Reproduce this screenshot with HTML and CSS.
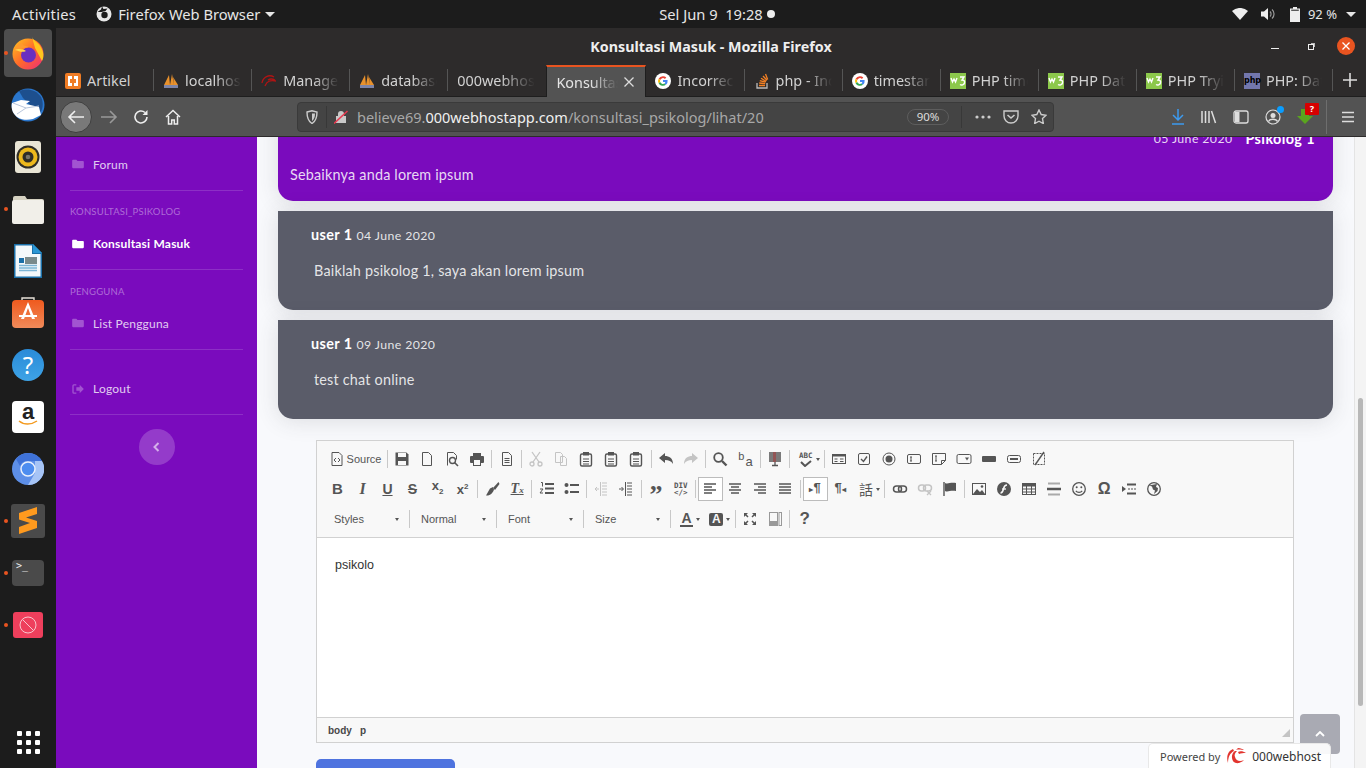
FILE: index.html
```html
<!DOCTYPE html>
<html lang="id">
<head>
    <meta charset="UTF-8">
    <meta name="viewport" content="width=device-width, initial-scale=1.0">
    <title>Konsultasi Masuk - Mozilla Firefox</title>
    <link rel="stylesheet" href="styles.css">
</head>
<body>
    <svg class="sprite" width="0" height="0">
        <defs>
            <linearGradient id="ffOuter" x1="0" y1="0" x2="1" y2="1"><stop offset="0" stop-color="#ffc61e"/><stop offset=".5" stop-color="#ff6a2a"/><stop offset="1" stop-color="#ec2a7c"/></linearGradient>
            <linearGradient id="blueGrad" x1="0" y1="0" x2="0" y2="1"><stop offset="0" stop-color="#2a8bd8"/><stop offset="1" stop-color="#3ea3e6"/></linearGradient>
            <linearGradient id="orangeGrad" x1="0" y1="0" x2="0" y2="1"><stop offset="0" stop-color="#ef5a1e"/><stop offset="1" stop-color="#f08a5a"/></linearGradient>
            <symbol id="i-folder" viewBox="0 0 14 12"><path d="M0 2a1 1 0 0 1 1-1h4l1.400 1.500H13a1 1 0 0 1 1 1V10a1 1 0 0 1-1 1H1a1 1 0 0 1-1-1z" fill="currentColor"/></symbol>
            <symbol id="f-sail" viewBox="0 0 16 16"><path d="M1 12 6 2l1 10zM7 12l2-11 2 11zM11 12 10 4l5 8z" fill="#e8912c"/><rect x="1" y="12" width="14" height="3" fill="#7c84a8"/></symbol>
            <symbol id="f-g" viewBox="0 0 16 16"><circle cx="8" cy="8" r="8" fill="#fff"/><path d="M8 3.200a4.800 4.800 0 0 1 3.300 1.300L9.900 5.900A2.900 2.900 0 0 0 5.200 7L3.600 5.800A4.800 4.800 0 0 1 8 3.200z" fill="#ea4335"/><path d="M3.600 5.800 5.200 7a3 3 0 0 0 0 2L3.600 10.200a4.800 4.800 0 0 1 0-4.400z" fill="#fbbc05"/><path d="M3.600 10.200 5.200 9a2.900 2.900 0 0 0 4.300 1.500l1.500 1.200A4.800 4.800 0 0 1 3.600 10.200z" fill="#34a853"/><path d="M8 7.100h4.600a5 5 0 0 1-1.600 4.600L9.500 10.500A2 2 0 0 0 10.300 9H8z" fill="#4285f4"/></symbol>
            <symbol id="f-w3" viewBox="0 0 16 16"><rect width="16" height="16" fill="#8cc84b"/><path d="M1 5l1.500 4L4 6l1.500 3L7 5M10 4h4l-2 3c2 0 3 1 2.500 3-.5 2-3 2.500-4.500 1.500" fill="none" stroke="#fff" stroke-width="1.400"/></symbol>
            <symbol id="s-doc" viewBox="0 0 16 16"><path d="M3.500 1.500h6l3 3v10h-9z" fill="none" stroke="currentColor"/></symbol>
            <symbol id="s-paste" viewBox="0 0 16 16"><rect x="2.500" y="3" width="11" height="12" rx="1.500" fill="none" stroke="currentColor" stroke-width="1.400"/><rect x="5" y="1" width="6" height="3.500" fill="currentColor"/><path d="M5 8h6M5 10.500h6M5 13h6" stroke="currentColor"/></symbol>
            <symbol id="s-box" viewBox="0 0 16 16"><rect x="1.500" y="3.500" width="13" height="9" rx="1.500" fill="none" stroke="currentColor"/><path d="M5 6v4M4 6h2M4 10h2" stroke="currentColor"/></symbol>
            <symbol id="s-lines-l" viewBox="0 0 16 16"><path d="M2 3h12M2 6h8M2 9h12M2 12h8" stroke="currentColor" stroke-width="1.500"/></symbol>
            <symbol id="s-lines-c" viewBox="0 0 16 16"><path d="M2 3h12M4 6h8M2 9h12M4 12h8" stroke="currentColor" stroke-width="1.500"/></symbol>
            <symbol id="s-lines-r" viewBox="0 0 16 16"><path d="M2 3h12M6 6h8M2 9h12M6 12h8" stroke="currentColor" stroke-width="1.500"/></symbol>
            <symbol id="s-lines-j" viewBox="0 0 16 16"><path d="M2 3h12M2 6h12M2 9h12M2 12h12" stroke="currentColor" stroke-width="1.500"/></symbol>
            <symbol id="s-indent" viewBox="0 0 16 16"><path d="M9 2h5M9 5h5M9 8h5M9 11h5M9 14h5M7.500 1v14" stroke="currentColor"/><path d="M1 8h4M3.500 6l2 2-2 2" fill="none" stroke="currentColor"/></symbol>
            <symbol id="s-outdent" viewBox="0 0 16 16"><path d="M9 2h5M9 5h5M9 8h5M9 11h5M9 14h5M7.500 1v14" stroke="currentColor"/><path d="M6 8H2M4 6 2 8l2 2" fill="none" stroke="currentColor"/></symbol>
        </defs>
    </svg>

    <header class="top-panel">
        <div class="panel-left">
            <span class="panel-item panel-activities">Activities</span>
            <span class="panel-item panel-app">
                <svg width="16" height="16" viewBox="0 0 16 16"><circle cx="8" cy="8" r="7.500" fill="#e8e8e8"/><circle cx="8.500" cy="9" r="3.200" fill="#1c1c1c"/><path d="M1.500 6 5 3.500l1-3 1.500 2.500 4-.5-2 2.500-4 1z" fill="#1c1c1c"/></svg>
                Firefox Web Browser <i class="caret"></i>
            </span>
        </div>
        <div class="panel-clock">Sel Jun 9&nbsp; 19:28 <i class="dot"></i></div>
        <div class="panel-right">
            <svg width="16" height="12" viewBox="0 0 16 12"><path d="M0 3a12 12 0 0 1 16 0l-8 9z" fill="#eee"/></svg>
            <svg class="panel-vol" width="15" height="14" viewBox="0 0 15 14"><path d="M0 4.500h3L7 1v12L3 9.500H0z" fill="#eee"/><path d="M9 4.500a3.500 3.500 0 0 1 0 5M11 2.500a6 6 0 0 1 0 9" fill="none" stroke="#999" stroke-width="1.200"/></svg>
            <svg class="panel-batt" width="10" height="15" viewBox="0 0 10 15"><path d="M3 0h4v1.500h3V15H0V1.500h3z" fill="#eee"/><rect x="1.200" y="2.700" width="7.600" height="1" fill="#1c1c1c"/></svg>
            <span class="panel-pct">92 %</span>
            <i class="caret"></i>
        </div>
    </header>

    <div class="desktop">
        <nav class="dock">
            <div class="dock-item active running">
                <svg width="34" height="34" viewBox="0 0 34 34"><circle cx="17" cy="18" r="15.500" fill="url(#ffOuter)"/><path d="M21 1c1 4 9 6 11 15 1 4 0 7-1 9L24 12z" fill="#ffc61e"/><circle cx="17.500" cy="19" r="7.500" fill="#6a2fc0"/><path d="M3 15c2-5 5-7 8-8 0 2 3 3 7 4-3 1-7 0-9 3z" fill="#ff9a2e"/><path d="M4 14c3-2 9-1 11 1-4 2-7 0-11-1z" fill="#ffd34a"/></svg>
            </div>
            <div class="dock-item">
                <svg width="34" height="34" viewBox="0 0 34 34"><circle cx="17" cy="17" r="16.500" fill="#2a76cc"/><path d="M8 3c7-3 17-2 22 6 3 6 2 13-2 17L12 10z" fill="#1d4f8e"/><path d="M1 15l9-3 9 1-4 3 13 3 2 8-8 4c-8 2-15 0-18-4-3-3-4-8-3-12z" fill="#fff"/><path d="M2 15l13 5 13-2M6 26l9-6" fill="none" stroke="#b9c6dc" stroke-width="1"/></svg>
            </div>
            <div class="dock-item">
                <svg width="26" height="32" viewBox="0 0 26 32"><rect width="26" height="32" rx="3" fill="#e9e5d5"/><circle cx="13" cy="16" r="11.500" fill="#2f2d27"/><circle cx="13" cy="16" r="9.500" fill="#edb81c"/><circle cx="13" cy="16" r="5.500" fill="#2f2d27"/><circle cx="13" cy="16" r="2.300" fill="#77736a"/></svg>
            </div>
            <div class="dock-item running">
                <svg width="32" height="30" viewBox="0 0 32 30"><path d="M1 4a2 2 0 0 1 2-2h10l2 3h15a2 2 0 0 1 2 2v20a2 2 0 0 1-2 2H3a2 2 0 0 1-2-2z" fill="#d6d2c2"/><rect x="0" y="6" width="32" height="24" rx="2" fill="#f1efe9"/></svg>
            </div>
            <div class="dock-item">
                <svg width="28" height="34" viewBox="0 0 28 34"><path d="M0 0h19l9 9v25H0z" fill="#1a6fa8"/><path d="M1.500 1.500h16.500v8.500h8.500v22.500H1.500z" fill="#f3f8fb"/><path d="M19 0l9 9h-9z" fill="#2b96d4"/><rect x="5" y="14" width="5" height="5" fill="#1a6fa8"/><rect x="11" y="13" width="12" height="7" fill="#7a8a8c"/><path d="M5 21.500h18M5 24h18M5 26.500h18" stroke="#7cb5d6" stroke-width="1.500"/></svg>
            </div>
            <div class="dock-item">
                <svg width="32" height="32" viewBox="0 0 32 32"><path d="M10 6V1h12v5" fill="none" stroke="#e6e0d8" stroke-width="1.400"/><rect y="3" width="32" height="28" rx="4" fill="url(#orangeGrad)"/><path d="M16 5l-7 17h3l4-11 4 11h3z" fill="#fff"/><path d="M7 18h18v2H7z" fill="#fff"/></svg>
            </div>
            <div class="dock-item">
                <svg width="32" height="32" viewBox="0 0 32 32"><circle cx="16" cy="16" r="16" fill="url(#blueGrad)"/><text x="16" y="25" text-anchor="middle" class="dock-help">?</text></svg>
            </div>
            <div class="dock-item">
                <div class="amazon-tile"><span>a</span><svg width="20" height="6" viewBox="0 0 20 6"><path d="M1 1c5 4 12 4 18 0" fill="none" stroke="#f39a1f" stroke-width="1.500"/></svg></div>
            </div>
            <div class="dock-item">
                <svg width="32" height="32" viewBox="0 0 32 32"><circle cx="16" cy="16" r="16" fill="#5d8fe8"/><path d="M16 0a16 16 0 0 1 14 8H16a8 8 0 0 0-8 5L4 6A16 16 0 0 1 16 0z" fill="#3f72d8"/><path d="M30 8a16 16 0 0 1-14 24l7-12V8z" fill="#a6c4f6"/><circle cx="16" cy="16" r="7" fill="#4d8df0" stroke="#e9f0fc" stroke-width="1.500"/></svg>
            </div>
            <div class="dock-item running">
                <svg width="34" height="34" viewBox="0 0 34 34"><rect width="34" height="34" rx="3" fill="#4a4a4a"/><path d="M8 12 26 6v7l-11 3.500L26 20v7L8 33v-7l11-4-11-3.500z" fill="#ff9a1e" transform="translate(0 -3)"/></svg>
            </div>
            <div class="dock-item running">
                <div class="term-tile"><span>&gt;_</span></div>
            </div>
            <div class="dock-item running">
                <svg width="30" height="26" viewBox="0 0 30 26"><rect width="30" height="26" rx="3" fill="#ee3f5c"/><circle cx="15" cy="13" r="8" fill="none" stroke="#f7c5cd" stroke-width="1"/><path d="M9.500 7.500 20.500 18.500" stroke="#f7c5cd"/></svg>
            </div>
            <div class="dock-grid">
                <i></i><i></i><i></i><i></i><i></i><i></i><i></i><i></i><i></i>
            </div>
        </nav>

        <div class="window">
            <div class="titlebar">
                <span></span>
                <strong class="title">Konsultasi Masuk - Mozilla Firefox</strong>
                <div class="win-controls">
                    <i class="win-min"></i>
                    <i class="win-max"></i>
                    <i class="win-close">
                        <svg width="18" height="18" viewBox="0 0 18 18"><path d="M5.500 5.500l7 7M12.500 5.500l-7 7" stroke="#fff" stroke-width="1.300"/></svg>
                    </i>
                </div>
            </div>

            <div class="tabs">
                <div class="tab"><svg class="fav" viewBox="0 0 16 16"><rect width="16" height="16" rx="2" fill="#f07c24"/><path d="M3 3h4v3H5v4h2v3H3zM13 3H9v3h2v4H9v3h4z" fill="#fff"/></svg><span class="tab-label plain">Artikel</span></div>
                <div class="tab"><svg class="fav"><use href="#f-sail"/></svg><span class="tab-label">localhost</span></div>
                <div class="tab"><svg class="fav" viewBox="0 0 16 16"><path d="M1 10C2 4 8 1 13 4M4 13c2-5 5-6 11-5M7 7c3-2 5-1 7 0" fill="none" stroke="#b01414" stroke-width="1.300"/></svg><span class="tab-label">Manage</span></div>
                <div class="tab"><svg class="fav"><use href="#f-sail"/></svg><span class="tab-label">database</span></div>
                <div class="tab no-icon"><span class="tab-label">000webhost</span></div>
                <div class="tab current"><span class="tab-label">Konsultasi</span><svg class="tab-x" width="10" height="10" viewBox="0 0 10 10"><path d="M.5.500l9 9M9.500.500l-9 9" stroke="#ddd" stroke-width="1.300"/></svg></div>
                <div class="tab"><svg class="fav"><use href="#f-g"/></svg><span class="tab-label">Incorrect</span></div>
                <div class="tab"><svg class="fav" viewBox="0 0 16 16"><path d="M3 10v5h10v-5" fill="none" stroke="#bcbbbb" stroke-width="1.300"/><path d="M5 12.500h6M5.200 10l6 .6M5.800 7.600l5.800 1.600M7 5.300l5.200 3M9 3l4 4.300M11.500 1l2.200 5.400" stroke="#f48024" stroke-width="1.300"/></svg><span class="tab-label">php - Incorrect</span></div>
                <div class="tab"><svg class="fav"><use href="#f-g"/></svg><span class="tab-label">timestamp</span></div>
                <div class="tab"><svg class="fav"><use href="#f-w3"/></svg><span class="tab-label">PHP time</span></div>
                <div class="tab"><svg class="fav"><use href="#f-w3"/></svg><span class="tab-label">PHP Date</span></div>
                <div class="tab"><svg class="fav"><use href="#f-w3"/></svg><span class="tab-label">PHP Tryit</span></div>
                <div class="tab"><span class="fav fav-php">php</span><span class="tab-label">PHP: Date</span></div>
                <div class="tab-new"><svg width="14" height="14" viewBox="0 0 14 14"><path d="M7 0v14M0 7h14" stroke="#ddd" stroke-width="1.600"/></svg></div>
            </div>

            <div class="toolbar">
                <span class="nav-back"><svg width="18" height="16" viewBox="0 0 18 16"><path d="M17 8H2M8 2 2 8l6 6" fill="none" stroke="#eee" stroke-width="1.600"/></svg></span>
                <span class="nav-btn dim"><svg width="18" height="16" viewBox="0 0 18 16"><path d="M1 8h15M10 2l6 6-6 6" fill="none" stroke="#999" stroke-width="1.600"/></svg></span>
                <span class="nav-btn"><svg width="16" height="16" viewBox="0 0 16 16"><path d="M14 8a6 6 0 1 1-2-4.500" fill="none" stroke="#eee" stroke-width="1.600"/><path d="M14.500 1v5h-5z" fill="#eee"/></svg></span>
                <span class="nav-btn"><svg width="16" height="16" viewBox="0 0 16 16"><path d="M1 8l7-6.500L15 8M3.500 7v8h3.200v-4h2.600v4h3.200V7" fill="none" stroke="#eee" stroke-width="1.500"/></svg></span>
                <div class="urlbar">
                    <svg class="url-shield" width="12" height="14" viewBox="0 0 12 14"><path d="M1 2l5-1.200L11 2c0 6-1.500 9.500-5 11.500C2.500 11.500 1 8 1 2z" fill="none" stroke="#ccc" stroke-width="1.400"/><path d="M6 3.500h3c0 3.500-1 6-3 7.500z" fill="#ccc"/></svg>
                    <i class="url-sep"></i>
                    <svg class="url-lock" width="14" height="14" viewBox="0 0 14 14"><path d="M4 6V4a3 3 0 0 1 6 0v2h2v7H2V6z" fill="#c9c9c9"/><path d="M0 13.500 13.500 1" stroke="#e8384f" stroke-width="1.500"/></svg>
                    <span class="url-text">believe69.<b>000webhostapp.com</b>/konsultasi_psikolog/lihat/20</span>
                    <span class="url-zoom">90%</span>
                    <i class="url-sep wide"></i>
                    <svg class="url-act" width="16" height="4" viewBox="0 0 16 4"><circle cx="2" cy="2" r="1.600" fill="#ccc"/><circle cx="8" cy="2" r="1.600" fill="#ccc"/><circle cx="14" cy="2" r="1.600" fill="#ccc"/></svg>
                    <svg class="url-act" width="16" height="14" viewBox="0 0 16 14"><path d="M1 1h14v5a7 7 0 0 1-14 0z" fill="none" stroke="#ccc" stroke-width="1.400"/><path d="M4.500 5 8 8l3.500-3" fill="none" stroke="#ccc" stroke-width="1.600"/></svg>
                    <svg class="url-act" width="16" height="15" viewBox="0 0 16 15"><path d="M8 1l2.200 4.500 4.800.7-3.500 3.400.8 4.900L8 12.200l-4.300 2.300.8-4.900L1 6.200l4.800-.7z" fill="none" stroke="#ccc" stroke-width="1.400"/></svg>
                </div>
                <div class="tool-right">
                    <svg width="14" height="16" viewBox="0 0 14 16"><path d="M7 0v11M2 6l5 5 5-5M1 15h12" fill="none" stroke="#3d9bf0" stroke-width="1.500"/></svg>
                    <svg width="16" height="14" viewBox="0 0 16 14"><path d="M1 1v12M4.500 1v12M8 1v12M10.500 1l4 12" stroke="#ddd" stroke-width="1.500"/></svg>
                    <svg width="16" height="14" viewBox="0 0 16 14"><rect x="1" y="1" width="14" height="12" rx="2" fill="none" stroke="#ddd" stroke-width="1.300"/><rect x="2" y="2" width="4.500" height="10" fill="#ddd"/></svg>
                    <span class="acct"><svg width="16" height="16" viewBox="0 0 16 16"><circle cx="8" cy="8" r="7" fill="none" stroke="#ddd" stroke-width="1.200"/><circle cx="8" cy="6.500" r="2.500" fill="#ddd"/><path d="M3.500 12.500C5 9.500 11 9.500 12.500 12.500" fill="none" stroke="#ddd" stroke-width="1.500"/></svg><i class="acct-dot"></i></span>
                    <span class="dl-addon"><svg width="16" height="16" viewBox="0 0 16 16"><path d="M4 0h8v7h4l-8 8-8-8h4z" fill="#5aa51e"/></svg><i class="dl-badge">?</i></span>
                    <i class="tool-sep"></i>
                    <svg class="tool-menu" width="12" height="12" viewBox="0 0 12 12"><path d="M0 1.500h12M0 6h12M0 10.500h12" stroke="#ddd" stroke-width="1.500"/></svg>
                </div>
            </div>

            <div class="page">
                <aside class="sidebar">
                    <a class="side-link side-first"><svg class="side-ico"><use href="#i-folder"/></svg>Forum</a>
                    <hr class="side-divider">
                    <div class="side-heading">Konsultasi_psikolog</div>
                    <a class="side-link side-active"><svg class="side-ico"><use href="#i-folder"/></svg>Konsultasi Masuk</a>
                    <hr class="side-divider">
                    <div class="side-heading">Pengguna</div>
                    <a class="side-link"><svg class="side-ico"><use href="#i-folder"/></svg>List Pengguna</a>
                    <hr class="side-divider">
                    <a class="side-link side-logout"><svg class="side-ico" viewBox="0 0 14 12"><path d="M5 1H2a1 1 0 0 0-1 1v8a1 1 0 0 0 1 1h3" fill="none" stroke="currentColor" stroke-width="1.600"/><path d="M5 4h4V1l5 5-5 5V8H5z" fill="currentColor"/></svg>Logout</a>
                    <hr class="side-divider">
                    <button class="side-toggle"><svg width="7" height="10" viewBox="0 0 7 10"><path d="M5.500 1 1.500 5l4 4" fill="none" stroke="currentColor" stroke-width="2"/></svg></button>
                </aside>

                <main class="content">
                    <div class="chat chat-psikolog">
                        <div class="chat-head"><span class="chat-date">05 June 2020</span><strong>Psikolog 1</strong></div>
                        <p class="chat-text">Sebaiknya anda lorem ipsum</p>
                    </div>
                    <div class="chat chat-user">
                        <div class="chat-head"><strong>user 1</strong> <span class="chat-date">04 June 2020</span></div>
                        <p class="chat-text">Baiklah psikolog 1, saya akan lorem ipsum</p>
                    </div>
                    <div class="chat chat-user">
                        <div class="chat-head"><strong>user 1</strong> <span class="chat-date">09 June 2020</span></div>
                        <p class="chat-text">test chat online</p>
                    </div>

                    <form class="reply">
                        <div class="editor">
                            <div class="ed-tools">
                                <div class="ed-row">
                                    <span class="ed-btn ed-source"><svg class="ic" viewBox="0 0 16 16"><path d="M3 1.500h7l3 3v10H3z" fill="none" stroke="currentColor"/><path d="M7 7 5 9l2 2M9 7l2 2-2 2" fill="none" stroke="currentColor"/></svg>Source</span><i class="sep"></i>
                                    <span class="ed-btn"><svg class="ic" viewBox="0 0 16 16"><path d="M1.500 1.500h11l2 2v11h-13z" fill="currentColor"/><rect x="4" y="2" width="8" height="4" fill="#f8f8f8"/><rect x="4" y="10" width="8" height="4" fill="#f8f8f8"/></svg></span>
                                    <span class="ed-btn"><svg class="ic"><use href="#s-doc"/></svg></span>
                                    <span class="ed-btn"><svg class="ic" viewBox="0 0 16 16"><path d="M3.500 14.500v-13h6l3 3v4" fill="none" stroke="currentColor"/><circle cx="8.500" cy="9.500" r="3" fill="none" stroke="currentColor" stroke-width="1.400"/><path d="M10.500 11.500l3.500 3.500" stroke="currentColor" stroke-width="1.600"/></svg></span>
                                    <span class="ed-btn"><svg class="ic" viewBox="0 0 16 16"><rect x="1" y="5" width="14" height="7" rx="1" fill="currentColor"/><rect x="4" y="2" width="8" height="3" fill="currentColor"/><rect x="4.500" y="8.500" width="7" height="6" fill="#f8f8f8" stroke="currentColor"/></svg></span><i class="sep"></i>
                                    <span class="ed-btn"><svg class="ic" viewBox="0 0 16 16"><path d="M3.500 1.500h6l3 3v10h-9zM5.500 7.500h5M5.500 9.500h5M5.500 11.500h5" fill="none" stroke="currentColor"/></svg></span><i class="sep"></i>
                                    <span class="ed-btn off"><svg class="ic" viewBox="0 0 16 16"><circle cx="4" cy="13" r="2" fill="none" stroke="currentColor" stroke-width="1.300"/><circle cx="12" cy="13" r="2" fill="none" stroke="currentColor" stroke-width="1.300"/><path d="M5 11 12 1M11 11 4 1" stroke="currentColor" stroke-width="1.300"/></svg></span>
                                    <span class="ed-btn off"><svg class="ic" viewBox="0 0 16 16"><path d="M2.500 1.500h5l2 2v8h-7zM7.500 5.500h4l2 2v7h-6z" fill="#f8f8f8" stroke="currentColor"/></svg></span>
                                    <span class="ed-btn"><svg class="ic"><use href="#s-paste"/></svg></span>
                                    <span class="ed-btn"><svg class="ic"><use href="#s-paste"/></svg></span>
                                    <span class="ed-btn"><svg class="ic"><use href="#s-paste"/></svg></span><i class="sep"></i>
                                    <span class="ed-btn"><svg class="ic" viewBox="0 0 16 16"><path d="M1 7l6-5v3c4 0 8 2 8 8-2-3-4-4-8-4v3z" fill="currentColor"/></svg></span>
                                    <span class="ed-btn off"><svg class="ic" viewBox="0 0 16 16"><path d="M15 7 9 2v3c-4 0-8 2-8 8 2-3 4-4 8-4v3z" fill="currentColor"/></svg></span><i class="sep"></i>
                                    <span class="ed-btn"><svg class="ic" viewBox="0 0 16 16"><circle cx="6.500" cy="6.500" r="4.300" fill="none" stroke="currentColor" stroke-width="1.800"/><path d="M10 10l4.500 4.500" stroke="currentColor" stroke-width="2.400"/></svg></span>
                                    <span class="ed-btn"><span class="ed-swap"><b>b</b><b>a</b></span></span><i class="sep"></i>
                                    <span class="ed-btn"><svg class="ic" viewBox="0 0 16 16"><rect x="2" y="1" width="12" height="10" fill="#7a7a7a"/><path d="M6 1h3v10H6z" fill="#a33c3c" opacity=".6"/><path d="M8 11v3M5 14.500h6" stroke="currentColor" stroke-width="1.300"/></svg></span><i class="sep"></i>
                                    <span class="ed-btn ed-drop"><span class="ed-spell"><span class="ed-abc">ABC</span><svg width="14" height="7" viewBox="0 0 14 7"><path d="M2 2l4 4 6-5" fill="none" stroke="currentColor" stroke-width="2"/></svg></span><i class="tri"></i></span><i class="sep"></i>
                                    <span class="ed-btn"><svg class="ic" viewBox="0 0 16 16"><rect x="1.500" y="3.500" width="13" height="9" fill="none" stroke="currentColor"/><path d="M1.500 3.500h13v2h-13z" fill="currentColor"/><path d="M3.500 8h3M3.500 10.500h3M9 8h3.500M9 10.500h3.500" stroke="currentColor"/></svg></span>
                                    <span class="ed-btn"><svg class="ic" viewBox="0 0 16 16"><rect x="2.500" y="2.500" width="11" height="11" rx="1.500" fill="none" stroke="currentColor"/><path d="M5 8l2.500 2.500L11 5.500" fill="none" stroke="currentColor" stroke-width="1.400"/></svg></span>
                                    <span class="ed-btn"><svg class="ic" viewBox="0 0 16 16"><circle cx="8" cy="8" r="6" fill="none" stroke="currentColor"/><circle cx="8" cy="8" r="3.500" fill="currentColor"/></svg></span>
                                    <span class="ed-btn"><svg class="ic"><use href="#s-box"/></svg></span>
                                    <span class="ed-btn"><svg class="ic" viewBox="0 0 16 16"><path d="M1.500 2.500h13v7l-4 4h-9zM14.500 9.500h-4v4M5 5v5M4 5h2M4 10h2" fill="none" stroke="currentColor"/></svg></span>
                                    <span class="ed-btn"><svg class="ic" viewBox="0 0 16 16"><rect x="1" y="3.500" width="14" height="9" rx="1.500" fill="none" stroke="currentColor"/><path d="M9 6.500h4l-2 3z" fill="currentColor"/></svg></span>
                                    <span class="ed-btn"><svg class="ic" viewBox="0 0 16 16"><rect x="1" y="5" width="14" height="6" rx="1" fill="currentColor"/></svg></span>
                                    <span class="ed-btn"><svg class="ic" viewBox="0 0 16 16"><rect x="1.500" y="4.500" width="13" height="7" rx="2" fill="none" stroke="currentColor"/><path d="M4 7h8v2H4z" fill="currentColor"/></svg></span>
                                    <span class="ed-btn"><svg class="ic" viewBox="0 0 16 16"><path d="M2.500 2.500h11v11h-11z" fill="none" stroke="currentColor" stroke-dasharray="2 1"/><path d="M4 14 13 1" stroke="currentColor" stroke-width="1.400"/></svg></span>
                                </div>
                                <div class="ed-row">
                                    <span class="ed-btn"><span class="g g-b">B</span></span>
                                    <span class="ed-btn"><span class="g g-i">I</span></span>
                                    <span class="ed-btn"><span class="g g-u">U</span></span>
                                    <span class="ed-btn"><span class="g g-s">S</span></span>
                                    <span class="ed-btn"><span class="g g-x">x<sub>2</sub></span></span>
                                    <span class="ed-btn"><span class="g g-x">x<sup>2</sup></span></span><i class="sep"></i>
                                    <span class="ed-btn"><svg class="ic" viewBox="0 0 16 16"><path d="M14.500 1 9 7l2 2 4.500-6z" fill="currentColor"/><path d="M9 6 6 7.500 2 14.500c4 .5 7-2.500 8-6z" fill="currentColor"/></svg></span>
                                    <span class="ed-btn"><span class="g g-tx">T<small>x</small></span></span><i class="sep"></i>
                                    <span class="ed-btn"><svg class="ic" viewBox="0 0 16 16"><path d="M6 3h9M6 7.500h9M6 12h9" stroke="currentColor" stroke-width="1.800"/><path d="M2 1.500h1.500v4M1 8h3l-3 4h3" fill="none" stroke="currentColor"/></svg></span>
                                    <span class="ed-btn"><svg class="ic" viewBox="0 0 16 16"><path d="M6 4h9M6 11h9" stroke="currentColor" stroke-width="2"/><circle cx="2.500" cy="4" r="2" fill="currentColor"/><circle cx="2.500" cy="11" r="2" fill="currentColor"/></svg></span><i class="sep"></i>
                                    <span class="ed-btn off"><svg class="ic"><use href="#s-outdent"/></svg></span>
                                    <span class="ed-btn"><svg class="ic"><use href="#s-indent"/></svg></span><i class="sep"></i>
                                    <span class="ed-btn"><span class="g g-q">&rdquo;</span></span>
                                    <span class="ed-btn"><span class="g g-div">DIV<br>&lt;/&gt;</span></span><i class="sep"></i>
                                    <span class="ed-btn on"><svg class="ic"><use href="#s-lines-l"/></svg></span>
                                    <span class="ed-btn"><svg class="ic"><use href="#s-lines-c"/></svg></span>
                                    <span class="ed-btn"><svg class="ic"><use href="#s-lines-r"/></svg></span>
                                    <span class="ed-btn"><svg class="ic"><use href="#s-lines-j"/></svg></span><i class="sep"></i>
                                    <span class="ed-btn on"><span class="g g-p"><small>&#9656;</small>&para;</span></span>
                                    <span class="ed-btn"><span class="g g-p">&para;<small>&#9666;</small></span></span>
                                    <span class="ed-btn ed-drop"><span class="g g-lang">話</span><i class="tri"></i></span><i class="sep"></i>
                                    <span class="ed-btn"><svg class="ic" viewBox="0 0 16 16"><rect x="1.500" y="5" width="8" height="6" rx="3" fill="none" stroke="currentColor" stroke-width="1.500"/><rect x="6.500" y="5" width="8" height="6" rx="3" fill="none" stroke="currentColor" stroke-width="1.500"/></svg></span>
                                    <span class="ed-btn off"><svg class="ic" viewBox="0 0 16 16"><rect x="1.500" y="4" width="7" height="6" rx="3" fill="none" stroke="currentColor" stroke-width="1.500"/><rect x="6.500" y="4" width="8" height="6" rx="3" fill="none" stroke="currentColor" stroke-width="1.500"/><path d="M10 10l4 4M14 10l-4 4" stroke="currentColor" stroke-width="1.300"/></svg></span>
                                    <span class="ed-btn"><svg class="ic" viewBox="0 0 16 16"><path d="M2 1v14" stroke="currentColor" stroke-width="1.400"/><path d="M3 2c3 1.500 5-1 11 0v8c-6-1-8 1.500-11 0z" fill="currentColor"/></svg></span><i class="sep"></i>
                                    <span class="ed-btn"><svg class="ic" viewBox="0 0 16 16"><rect x="1.500" y="2.500" width="13" height="11" fill="none" stroke="currentColor"/><path d="M2 13l4-5 3 3 2-2 3 4z" fill="currentColor"/><circle cx="11" cy="5.500" r="1.300" fill="currentColor"/></svg></span>
                                    <span class="ed-btn"><svg class="ic" viewBox="0 0 16 16"><circle cx="8" cy="8" r="7" fill="currentColor"/><path d="M11 4C8 4 8 6 7.500 8S6 12 4.500 12" fill="none" stroke="#f8f8f8" stroke-width="1.500"/><path d="M6 8h4" stroke="#f8f8f8" stroke-width="1.300"/></svg></span>
                                    <span class="ed-btn"><svg class="ic" viewBox="0 0 16 16"><rect x="1.500" y="2.500" width="13" height="11" fill="none" stroke="currentColor"/><path d="M1.500 3h13v2.500h-13z" fill="currentColor"/><path d="M1.500 8h13M1.500 11h13M5.500 5v8M10.500 5v8" stroke="currentColor"/></svg></span>
                                    <span class="ed-btn"><svg class="ic" viewBox="0 0 16 16"><path d="M2 2.500h12M2 13.500h12" stroke="#aaa" stroke-width="2"/><path d="M1 8h14" stroke="currentColor" stroke-width="2.500"/></svg></span>
                                    <span class="ed-btn"><svg class="ic" viewBox="0 0 16 16"><circle cx="8" cy="8" r="6.300" fill="none" stroke="currentColor" stroke-width="1.300"/><circle cx="5.700" cy="6.200" r="1" fill="currentColor"/><circle cx="10.300" cy="6.200" r="1" fill="currentColor"/><path d="M4.800 9.800c1.500 2 5 2 6.400 0" fill="none" stroke="currentColor" stroke-width="1.200"/></svg></span>
                                    <span class="ed-btn"><span class="g g-om">&Omega;</span></span>
                                    <span class="ed-btn"><svg class="ic" viewBox="0 0 16 16"><path d="M1 5l4 3-4 3z" fill="currentColor"/><path d="M6 3.500h9M6 12.500h9" stroke="currentColor" stroke-width="2"/><path d="M7 8h8" stroke="currentColor" stroke-dasharray="2 1"/></svg></span>
                                    <span class="ed-btn"><svg class="ic" viewBox="0 0 16 16"><circle cx="8" cy="8" r="6.300" fill="none" stroke="currentColor" stroke-width="1.300"/><path d="M3 4.500l3 1 1 3 2 1-1 3.500 3.500-3 .5-3-2-1 1-3-3 .500z" fill="currentColor"/></svg></span>
                                </div>
                                <div class="ed-row">
                                    <span class="ed-combo">Styles<i class="tri"></i></span><i class="sep"></i>
                                    <span class="ed-combo">Normal<i class="tri"></i></span><i class="sep"></i>
                                    <span class="ed-combo">Font<i class="tri"></i></span><i class="sep"></i>
                                    <span class="ed-combo">Size<i class="tri"></i></span><i class="sep"></i>
                                    <span class="ed-btn ed-drop"><span class="g g-color">A</span><i class="tri"></i></span>
                                    <span class="ed-btn ed-drop"><span class="g g-bg">A</span><i class="tri"></i></span><i class="sep"></i>
                                    <span class="ed-btn"><svg class="ic" viewBox="0 0 16 16"><path d="M2 6V2h4zM14 6V2h-4zM2 10v4h4zM14 10v4h-4z" fill="currentColor"/><path d="M3 3l3 3M13 3l-3 3M3 13l3-3M13 13l-3-3" stroke="currentColor" stroke-width="1.500"/></svg></span>
                                    <span class="ed-btn off-mid"><svg class="ic" viewBox="0 0 16 16"><rect x="2.500" y="1.500" width="8" height="13" fill="none" stroke="currentColor"/><path d="M3 10h7v4H3z" fill="currentColor"/><rect x="12" y="1.500" width="2.500" height="13" fill="none" stroke="currentColor"/></svg></span><i class="sep"></i>
                                    <span class="ed-btn"><span class="g g-help">?</span></span>
                                </div>
                            </div>
                            <div class="ed-body"><p>psikolo</p></div>
                            <div class="ed-path"><b>body</b><b>p</b><i class="ed-resize"></i></div>
                        </div>
                        <button type="button" class="btn-send"></button>
                    </form>
                </main>

                <div class="scroll"><i></i></div>

                <a class="to-top"><svg width="10" height="6" viewBox="0 0 10 6"><path d="M1 5l4-4 4 4" fill="none" stroke="#fff" stroke-width="1.800"/></svg></a>
                <div class="powered">
                    Powered by
                    <svg width="22" height="18" viewBox="0 0 22 18"><path d="M8 2C3 4 1 9 3 16 3 10 5 6 9 4zM10 4c-3 2-4 6-2 10 2 3 7 3 11-1-4 2-8 1-9-3-1-2 0-4 2-6zM13 1l-2 2c3-1 6 0 8 0-2-1-3-2-6-2zM13 5c2-1 5-1 8 1-3 0-5 0-7 1z" fill="#e2352f"/></svg>
                    <span class="powered-name">000webhost</span>
                </div>
            </div>
        </div>
    </div>
</body>
</html>
```

FILE: styles.css
```css
* {
    box-sizing: border-box;
}
html, body {
    height: 100%;
}
body {
    margin: 0;
    width: 1366px;
    height: 768px;
    overflow: hidden;
    display: flex;
    flex-direction: column;
    font-family: "Noto Sans", sans-serif;
    background-color: #1c1c1c;
}
i {
    font-style: normal;
}
.sprite {
    position: absolute;
}

/* gnome panel */
.top-panel {
    height: 28px;
    flex: none;
    display: grid;
    grid-template-columns: 1fr auto 1fr;
    align-items: center;
    background-color: #1c1c1c;
    color: #e6e6e6;
    font-size: 14.700px;
}
.panel-left {
    display: flex;
    align-items: center;
    padding-left: 12px;
    gap: 20px;
}
.panel-activities {
    letter-spacing: 0.3px;
}
.panel-app {
    display: flex;
    align-items: center;
    gap: 6px;
}
.panel-app .caret {
    margin-left: -1px;
}
.caret {
    display: inline-block;
    width: 0;
    height: 0;
    border-left: 5px solid transparent;
    border-right: 5px solid transparent;
    border-top: 5px solid #e6e6e6;
}
.panel-clock {
    display: flex;
    align-items: center;
    gap: 4px;
    padding-left: 68px;
}
.dot {
    width: 8px;
    height: 8px;
    border-radius: 50%;
    background-color: #eee;
}
.panel-right {
    display: flex;
    align-items: center;
    justify-content: flex-end;
    padding-right: 10px;
}
.panel-vol {
    margin-left: 13px;
}
.panel-batt {
    margin-left: 14px;
}
.panel-pct {
    font-size: 13px;
    margin: 0 9px 0 8px;
}

.desktop {
    flex: 1;
    min-height: 0;
    display: flex;
}

/* dock */
.dock {
    width: 56px;
    flex: none;
    display: flex;
    flex-direction: column;
    gap: 4px;
    padding: 1px 4px 0;
    background-color: #1c1c1c;
}
.dock-item {
    position: relative;
    height: 48px;
    flex: none;
    display: flex;
    align-items: center;
    justify-content: center;
    border-radius: 4px;
}
.dock-item.active {
    background-color: #4d4d4d;
}
.dock-item.running::before {
    content: "";
    position: absolute;
    left: 0;
    top: 50%;
    width: 4px;
    height: 4px;
    margin-top: -2px;
    border-radius: 50%;
    background-color: #e95420;
}
.dock-help {
    font-family: "Noto Sans", sans-serif;
    font-size: 24px;
    fill: #fff;
}
.amazon-tile {
    width: 32px;
    height: 32px;
    border-radius: 4px;
    background-color: #fff;
    display: flex;
    flex-direction: column;
    align-items: center;
    font-family: "Liberation Sans", sans-serif;
    font-weight: bold;
    font-size: 22px;
    line-height: 22px;
    color: #222;
}
.amazon-tile svg {
    margin-top: -3px;
}
.term-tile {
    width: 32px;
    height: 26px;
    border-radius: 4px;
    background-color: #4a4a4a;
    color: #eee;
    font-family: "DejaVu Sans Mono", monospace;
    font-size: 10px;
    line-height: 12px;
    padding-left: 4px;
}
.dock-grid {
    margin-top: auto;
    margin-bottom: 14px;
    align-self: center;
    display: grid;
    grid-template-columns: repeat(3, 5px);
    gap: 4px;
}
.dock-grid i {
    width: 5px;
    height: 5px;
    border-radius: 1px;
    background-color: #fff;
}

/* firefox window */
.window {
    flex: 1;
    min-width: 0;
    display: flex;
    flex-direction: column;
}
.titlebar {
    height: 36px;
    flex: none;
    display: grid;
    grid-template-columns: 1fr auto 1fr;
    align-items: center;
    background-color: #2d2b2b;
    color: #eee;
}
.title {
    font-size: 14.300px;
}
.win-controls {
    display: flex;
    align-items: center;
    justify-content: flex-end;
    padding-right: 11px;
}
.win-min {
    width: 8px;
    height: 1px;
    margin-top: 5px;
    margin-right: 4px;
    background-color: #eee;
}
.win-max {
    width: 6px;
    height: 6px;
    margin-left: 25px;
    margin-top: 1px;
    border: 1px solid #eee;
    box-shadow: 2px -2px 0 -1px #bbb;
}
.win-close {
    width: 18px;
    height: 18px;
    margin-left: 23px;
    border-radius: 50%;
    background-color: #e95420;
}
.win-close svg {
    display: block;
}
.tabs {
    height: 33px;
    flex: none;
    display: flex;
    background-color: #2d2b2b;
    border-bottom: 1px solid #1e1e1e;
    color: #d2d2d2;
    font-size: 14.400px;
}
.tab {
    position: relative;
    flex: 1 1 0;
    min-width: 0;
    display: flex;
    align-items: center;
    gap: 6px;
    padding: 1px 11px 0 9px;
}
.tab::after {
    content: "";
    position: absolute;
    right: 0;
    top: 5px;
    bottom: 5px;
    width: 1px;
    background-color: #555;
}
.tab.current::after,
.tab.no-icon::after {
    display: none;
}
.tab.current {
    background-color: #535353;
    border-top: 2px solid #e95420;
    margin-top: 1px;
    margin-bottom: -1px;
    padding: 0 11px 0 9px;
    color: #e6e6e6;
    z-index: 1;
    border-right: 1px solid #1e1e1e;
    border-left: 1px solid #1e1e1e;
}
.fav {
    width: 16px;
    height: 16px;
    flex: none;
}
.fav-php {
    background-color: #7377ad;
    color: #000;
    font-family: "DejaVu Sans", sans-serif;
    font-size: 8px;
    font-weight: bold;
    line-height: 16px;
    text-align: center;
}
.tab-label {
    flex: 1;
    min-width: 0;
    white-space: nowrap;
    overflow: hidden;
    -webkit-mask-image: linear-gradient(to right, #000 55%, transparent);
    mask-image: linear-gradient(to right, #000 55%, transparent);
}
.tab-label.plain {
    -webkit-mask-image: none;
    mask-image: none;
}
.tab-x {
    flex: none;
}
.tab-new {
    width: 33px;
    flex: none;
    display: flex;
    align-items: center;
    justify-content: center;
}
.toolbar {
    height: 40px;
    flex: none;
    display: flex;
    align-items: center;
    padding: 0 0 0 4px;
    background-color: #535353;
    border-bottom: 1px solid #2d2b2b;
}
.nav-back {
    width: 32px;
    height: 32px;
    flex: none;
    display: flex;
    align-items: center;
    justify-content: center;
    border-radius: 50%;
    background-color: #797979;
    border: 1px solid #3f3f3f;
}
.nav-btn {
    width: 32px;
    flex: none;
    display: flex;
    justify-content: center;
}
.nav-btn:nth-child(2) {
    margin-left: 1px;
}
.urlbar {
    width: 757px;
    height: 30px;
    margin-left: 108px;
    flex: none;
    display: flex;
    align-items: center;
    border: 1px solid #3a3a3a;
    border-radius: 4px;
    background-color: #444;
    color: #a8a8a8;
    font-size: 14.500px;
}
.url-shield {
    margin-left: 8px;
}
.url-sep {
    width: 1px;
    height: 22px;
    margin-left: 8px;
    background-color: #383838;
}
.url-sep.wide {
    margin-left: 12px;
    margin-right: 13px;
}
.url-lock {
    margin: 0 9px 0 7px;
}
.url-text {
    flex: 1;
    white-space: nowrap;
    overflow: hidden;
}
.url-text b {
    font-weight: normal;
    color: #f0f0f0;
}
.url-zoom {
    width: 42px;
    height: 16px;
    border: 1px solid #5d5d5d;
    border-radius: 8px;
    color: #ddd;
    font-size: 11.500px;
    line-height: 14px;
    text-align: center;
}
.url-act {
    margin-right: 12px;
}
.url-act:last-child {
    margin-right: 6px;
}
.tool-right {
    flex: 1;
    display: flex;
    align-items: center;
    gap: 16px;
    padding-left: 117px;
}
.acct,
.dl-addon {
    position: relative;
    display: flex;
}
.acct-dot {
    position: absolute;
    top: -3px;
    right: -3px;
    width: 7px;
    height: 7px;
    border-radius: 50%;
    background-color: #0a9dff;
}
.dl-badge {
    position: absolute;
    top: -6px;
    left: 8px;
    width: 14px;
    height: 12px;
    border-radius: 1px;
    background-color: #d70000;
    color: #fff;
    font-size: 9px;
    font-weight: bold;
    line-height: 12px;
    text-align: center;
}
.tool-sep {
    width: 1px;
    height: 34px;
    margin-left: -3px;
    background-color: #6e6e6e;
}
.tool-menu {
    margin-left: -1px;
}

/* page */
.page {
    position: relative;
    flex: 1;
    min-height: 0;
    display: flex;
    background-color: #f8f9fc;
    font-family: "Lato", sans-serif;
}
.sidebar {
    width: 201px;
    flex: none;
    padding: 0 14px;
    display: flex;
    flex-direction: column;
    background-color: #7a0bbd;
    color: rgba(255, 255, 255, 0.8);
    font-size: 12px;
}
.side-link {
    display: flex;
    align-items: center;
    gap: 9px;
    height: 16px;
    padding-left: 2px;
    letter-spacing: 0.2px;
}
.side-first {
    margin-top: 19px;
}
.side-heading + .side-link {
    margin-top: 17.500px;
}
.side-logout {
    margin-top: 31px;
}
.side-active {
    color: #fff;
    font-weight: bold;
}
.side-ico {
    width: 12px;
    height: 10px;
    flex: none;
    color: rgba(255, 255, 255, 0.3);
}
.side-active .side-ico {
    color: #fff;
}
.side-divider {
    width: 100%;
    margin: 17.500px 0 0;
    border: 0;
    border-top: 1px solid rgba(255, 255, 255, 0.15);
}
.side-heading {
    margin-top: 15.500px;
    font-size: 9.500px;
    line-height: 12px;
    text-transform: uppercase;
    letter-spacing: 0.2px;
    color: rgba(255, 255, 255, 0.4);
}
.side-toggle {
    align-self: center;
    width: 36px;
    height: 36px;
    margin-top: 14px;
    padding: 0;
    border: 0;
    border-radius: 50%;
    background-color: rgba(255, 255, 255, 0.2);
    color: rgba(255, 255, 255, 0.6);
}
.content {
    flex: 1;
    min-width: 0;
    overflow: hidden;
    padding: 0 21px 0 21px;
}
.chat {
    border-radius: 0 0 15px 15px;
    box-shadow: 0 2px 22px rgba(58, 59, 69, 0.15);
    color: rgba(255, 255, 255, 0.85);
    font-size: 14.400px;
    letter-spacing: 0.2px;
    line-height: 18px;
}
.chat-head {
    height: 18px;
    letter-spacing: 0.4px;
}
.chat-text {
    margin: 18px 0 0;
}
.chat-head strong {
    color: #fff;
}
.chat-date {
    font-size: 12.300px;
}
.chat-psikolog {
    margin-top: -22px;
    padding: 15px 18px 17px 12px;
    background-color: #7a0bbd;
}
.chat-psikolog .chat-head {
    display: flex;
    justify-content: flex-end;
    gap: 13px;
}
.chat-user {
    margin-top: 10px;
    padding: 15px 18px 30px 33px;
    background-color: #5a5c69;
}
.chat-user .chat-text {
    padding-left: 3px;
}
.reply {
    margin-top: 21px;
    padding: 0 39px 0 38px;
}
.editor {
    height: 303px;
    display: flex;
    flex-direction: column;
    border: 1px solid #d1d1d1;
    background-color: #fff;
    font-family: "Liberation Sans", sans-serif;
}
.ed-tools {
    height: 97px;
    flex: none;
    padding: 3px 0 0 8px;
    background-color: #f8f8f8;
    border-bottom: 1px solid #d1d1d1;
    color: #555;
}
.ed-row {
    height: 30px;
    display: flex;
    align-items: center;
}
.ed-btn {
    width: 25px;
    height: 24px;
    flex: none;
    display: flex;
    align-items: center;
    justify-content: center;
    font-size: 11px;
}
.ed-btn.on {
    border: 1px solid #bcbcbc;
    background-color: #fff;
}
.ed-btn.off {
    color: #c4c4c4;
}
.ed-btn.off-mid {
    color: #999;
}
.ed-source {
    width: 60px;
    gap: 2px;
}
.ed-drop {
    width: 30px;
    gap: 3px;
    padding-left: 4px;
}
.ic {
    width: 16px;
    height: 16px;
    flex: none;
}
.sep {
    width: 1px;
    height: 18px;
    flex: none;
    margin: 0 1.800px;
    background-color: #c8c8c8;
}
.tri {
    width: 0;
    height: 0;
    flex: none;
    border-left: 2.500px solid transparent;
    border-right: 2.500px solid transparent;
    border-top: 3px solid #555;
}
.ed-combo {
    width: 82.400px;
    flex: none;
    display: flex;
    align-items: center;
    justify-content: space-between;
    padding: 0 8px 0 9px;
    font-size: 11px;
}
.g {
    font-family: "Liberation Sans", sans-serif;
    font-weight: bold;
    font-size: 14px;
    line-height: 16px;
    white-space: nowrap;
}
.g-b {
    font-size: 15px;
}
.g-i {
    font-family: "Liberation Serif", serif;
    font-style: italic;
    font-size: 16px;
}
.g-u {
    text-decoration: underline;
}
.g-s {
    text-decoration: line-through;
}
.g-x {
    font-size: 13px;
}
.g-x sub,
.g-x sup {
    font-size: 8px;
}
.g-tx {
    font-family: "Liberation Serif", serif;
    font-style: italic;
    text-decoration: underline;
}
.g-tx small {
    font-size: 9px;
}
.g-q {
    font-family: "Liberation Serif", serif;
    font-size: 26px;
    line-height: 28px;
    height: 16px;
}
.g-div {
    font-size: 7.500px;
    line-height: 7.500px;
    text-align: center;
    font-family: "DejaVu Sans Mono", monospace;
}
.g-p {
    font-size: 13px;
}
.g-p small {
    font-size: 8px;
}
.g-lang {
    font-family: "Noto Sans CJK TC", sans-serif;
    font-size: 14px;
    font-weight: normal;
}
.g-om {
    font-size: 16px;
}
.g-color {
    border-bottom: 2px solid #555;
    line-height: 13px;
    padding: 0 1px;
}
.g-bg {
    width: 14px;
    height: 13px;
    border-radius: 2px;
    background-color: #555;
    color: #f8f8f8;
    line-height: 13px;
    text-align: center;
    font-size: 12px;
}
.g-help {
    font-size: 17px;
}
.ed-swap {
    display: flex;
    gap: 1px;
    font-size: 11px;
    line-height: 10px;
}
.ed-swap b {
    font-weight: normal;
}
.ed-swap b:last-child {
    margin-top: 6px;
    font-size: 13px;
}
.ed-spell {
    display: flex;
    flex-direction: column;
    align-items: center;
}
.ed-abc {
    font-family: "DejaVu Sans Mono", monospace;
    font-size: 7.500px;
    font-weight: bold;
    line-height: 8px;
}
.ed-body {
    flex: 1;
    padding: 0 18px;
    font-size: 12.500px;
    line-height: 18px;
    color: #333;
}
.ed-body p {
    margin: 18px 0 0;
}
.ed-path {
    position: relative;
    height: 25px;
    flex: none;
    display: flex;
    align-items: center;
    gap: 8px;
    padding-left: 11px;
    background-color: #f8f8f8;
    border-top: 1px solid #d1d1d1;
    color: #484848;
    font-size: 10px;
}
.ed-resize {
    position: absolute;
    right: 3px;
    bottom: 5px;
    width: 0;
    height: 0;
    border-left: 8px solid transparent;
    border-bottom: 8px solid #c4c4c4;
}
.btn-send {
    display: block;
    width: 139px;
    height: 40px;
    margin-top: 16px;
    border: 0;
    border-radius: 5px;
    background-color: #4e73df;
}
.scroll {
    width: 12px;
    flex: none;
    padding: 261px 3px 0 3px;
    background-color: #f4f4f4;
    border-left: 1px solid #e4e4e4;
}
.scroll i {
    display: block;
    height: 308px;
    border-radius: 3px;
    background-color: #b8b8b8;
}
.to-top {
    position: absolute;
    right: 26px;
    bottom: 14px;
    width: 40px;
    height: 40px;
    display: flex;
    align-items: center;
    justify-content: center;
    border-radius: 4px;
    background-color: rgba(90, 92, 105, 0.5);
}
.powered {
    position: absolute;
    right: 35px;
    bottom: 0;
    width: 183px;
    height: 25px;
    display: flex;
    align-items: center;
    gap: 5px;
    padding-left: 11px;
    border: 1px solid #e8e8e8;
    border-bottom: 0;
    border-radius: 5px 5px 0 0;
    background-color: rgba(255, 255, 255, 0.92);
    color: #444;
    font-family: "Noto Sans", sans-serif;
    font-size: 11px;
}
.powered-name {
    font-size: 12px;
    color: #333;
}
```
